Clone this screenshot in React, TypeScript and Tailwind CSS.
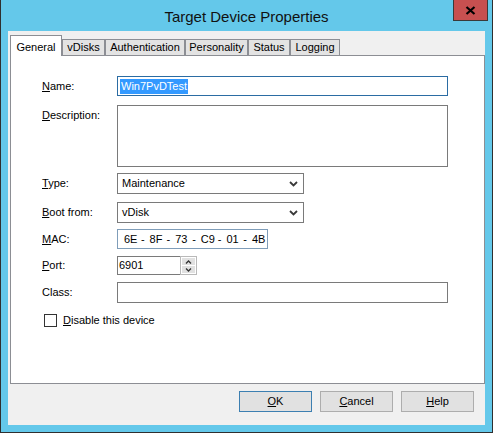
import React from "react";

const font = { fontFamily: '"Liberation Sans", Arial, sans-serif' };

function Chevron() {
  return (
    <svg width="9" height="6" viewBox="0 0 9 6" className="block">
      <path d="M1 1 L4.5 4.5 L8 1" fill="none" stroke="#3a3a3a" strokeWidth="1.8" />
    </svg>
  );
}

function Label({ children, className = "" }: { children: React.ReactNode; className?: string }) {
  return <div className={"w-[75px] shrink-0 text-[11px] text-black leading-[13px] " + className}>{children}</div>;
}

function U({ children }: { children: React.ReactNode }) {
  return <span className="underline underline-offset-[1px] decoration-1">{children}</span>;
}

function Select({ value }: { value: string }) {
  return (
    <div className="w-[187px] h-[21px] border border-[#7a7a7a] bg-white flex items-center pl-[4px] pr-[5px]">
      <span className="flex-1 text-[11px] text-black">{value}</span>
      <Chevron />
    </div>
  );
}

export default function App() {
  const tabs = [
    { name: "vDisks", w: "w-[43px]" },
    { name: "Authentication", w: "w-[80px]" },
    { name: "Personality", w: "w-[63px]" },
    { name: "Status", w: "w-[42px]" },
    { name: "Logging", w: "w-[50px]" },
  ];
  const mac = ["6E", "8F", "73", "C9", "01", "4B"];
  return (
    <div style={font} className="w-[493px] h-[433px] bg-[#64c8ea] border-x border-b border-[#2f2f2f] flex flex-col">
      {/* Title bar */}
      <div className="relative h-[31px] shrink-0 flex items-center justify-center">
        <span className="text-[15px] text-[#111] leading-none mt-[1px]">Target Device Properties</span>
        <div className="absolute right-[4px] top-0 w-[35px] h-[21px] bg-[#c75050] border border-[#3a3a3a] border-t-0 flex items-center justify-center">
          <svg width="11" height="9" viewBox="0 0 11 9">
            <path d="M1.5 1 L9.5 8 M9.5 1 L1.5 8" stroke="#000" strokeWidth="2.2" />
          </svg>
        </div>
      </div>

      {/* Client area */}
      <div className="mx-[7px] h-[394px] bg-[#f0f0f0] flex flex-col pt-[4px] pl-[2px]">
        {/* Tabs */}
        <div className="relative z-10 h-[20px] flex items-end">
          <div className="w-[52px] h-[21px] -mb-px bg-white border-l border-t border-r border-[#8c8e94] flex items-start justify-center pt-[3px] text-[11px] text-black">
            General
          </div>
          {tabs.map((t) => (
            <div
              key={t.name}
              className={t.w + " h-[16px] bg-[#e3e3e3] border-l border-t border-r border-[#8c8e94] flex items-center justify-center text-[11px] text-black leading-none"}
            >
              {t.name}
            </div>
          ))}
        </div>

        {/* Panel */}
        <div className="w-[475px] h-[329px] bg-white border border-[#8c8e94] pt-[20px] pl-[31px] flex flex-col">
          {/* Name */}
          <div className="flex items-center h-[20px]">
            <Label><U>N</U>ame:</Label>
            <div className="w-[331px] h-[20px] border border-[#2b6ca3] bg-white flex items-center pl-[2px]">
              <span className="bg-[#3399ff] text-white text-[11px] leading-[15px] h-[15px] px-[1px]">Win7PvDTest</span>
            </div>
          </div>
          {/* Description */}
          <div className="flex items-start mt-[9px]">
            <Label className="pt-[4px]"><U>D</U>escription:</Label>
            <div className="w-[331px] h-[62px] border border-[#7a7a7a] bg-white" />
          </div>
          {/* Type */}
          <div className="flex items-center mt-[6px]">
            <Label><U>T</U>ype:</Label>
            <Select value="Maintenance" />
          </div>
          {/* Boot from */}
          <div className="flex items-center mt-[8px]">
            <Label><U>B</U>oot from:</Label>
            <Select value="vDisk" />
          </div>
          {/* MAC */}
          <div className="flex items-center mt-[6px]">
            <Label><U>M</U>AC:</Label>
            <div className="w-[151px] h-[20px] border border-[#7f9db9] bg-white flex items-center pl-[6px] text-[11px] text-black whitespace-nowrap">
              {mac.map((m, i) => (
                <React.Fragment key={m}>
                  {i > 0 && <span className="w-[13.6px] shrink-0 text-center">-</span>}
                  <span className="w-[12px] shrink-0 text-center">{m}</span>
                </React.Fragment>
              ))}
            </div>
          </div>
          {/* Port */}
          <div className="flex items-center mt-[7px]">
            <Label><U>P</U>ort:</Label>
            <div className="flex h-[19px]">
              <div className="w-[63px] h-[19px] border border-[#7a7a7a] border-r-0 bg-white flex items-center pl-[1px] text-[11px] text-black">6901</div>
              <div className="w-[17px] h-[19px] border border-[#b9b9b9] bg-white flex flex-col items-center justify-center gap-[1px] px-[2px]">
                <div className="w-[13px] h-[7px] bg-[#e1e1e1] flex items-center justify-center">
                  <svg width="7" height="4" viewBox="0 0 7 4"><path d="M1 3.5 L3.5 1 L6 3.5" fill="none" stroke="#333" strokeWidth="1.3" /></svg>
                </div>
                <div className="w-[13px] h-[7px] bg-[#e1e1e1] flex items-center justify-center">
                  <svg width="7" height="4" viewBox="0 0 7 4"><path d="M1 0.5 L3.5 3 L6 0.5" fill="none" stroke="#333" strokeWidth="1.3" /></svg>
                </div>
              </div>
            </div>
          </div>
          {/* Class */}
          <div className="flex items-center mt-[7px]">
            <Label>Class:</Label>
            <div className="w-[331px] h-[21px] border border-[#7a7a7a] bg-white" />
          </div>
          {/* Checkbox */}
          <div className="flex items-center mt-[11px] pl-[2px]">
            <div className="w-[13px] h-[13px] border border-[#333] bg-white" />
            <span className="ml-[6px] text-[11px] text-black leading-[13px]"><U>D</U>isable this device</span>
          </div>
        </div>

        {/* Buttons */}
        <div className="flex justify-end gap-[8px] mt-[7px] pr-[11px]">
          <button className="w-[73px] h-[21px] bg-[#e1e1e1] border border-[#3c7fb1] text-[11px] text-black flex items-center justify-center">
            <U>O</U>K
          </button>
          <button className="w-[73px] h-[21px] bg-[#e1e1e1] border border-[#adadad] text-[11px] text-black flex items-center justify-center">
            <U>C</U>ancel
          </button>
          <button className="w-[73px] h-[21px] bg-[#e1e1e1] border border-[#adadad] text-[11px] text-black flex items-center justify-center">
            <U>H</U>elp
          </button>
        </div>
      </div>
    </div>
  );
}
